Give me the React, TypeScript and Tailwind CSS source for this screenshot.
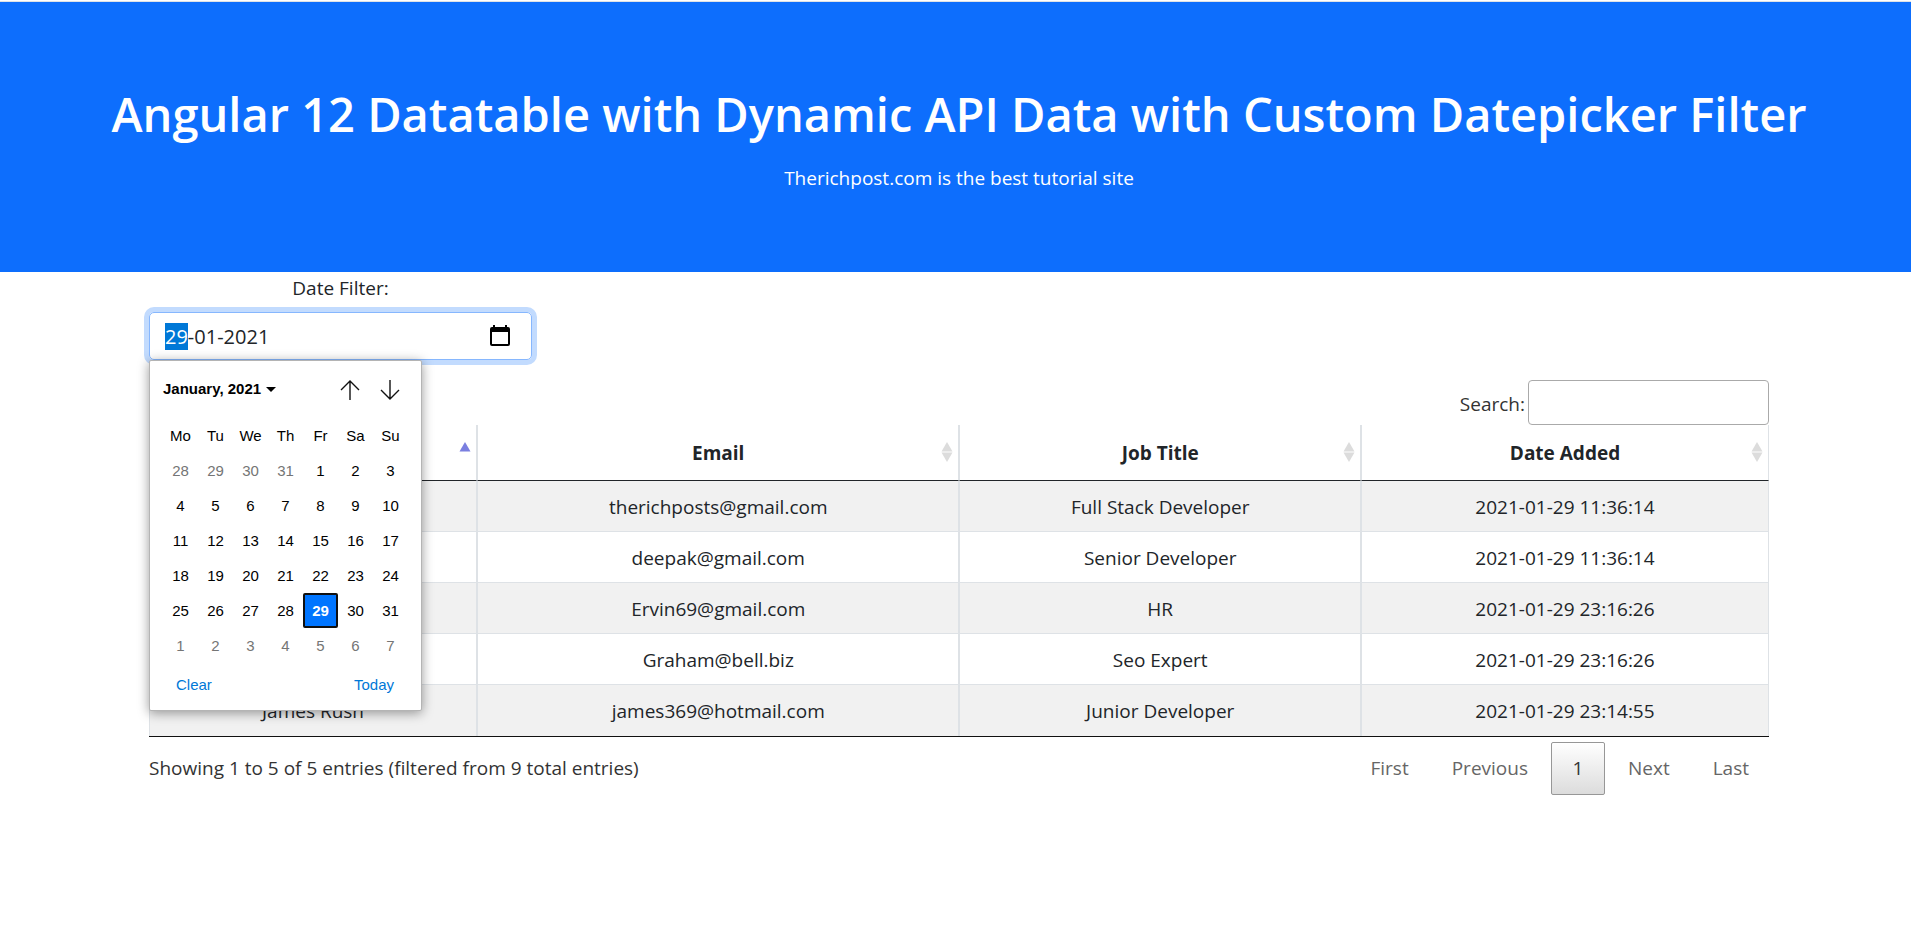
import { useEffect, useRef } from "react";
import { clsx } from "clsx";

type Row = {
  name?: string;
  email: string;
  job: string;
  added: string;
};

const rows: Row[] = [
  { email: "therichposts@gmail.com", job: "Full Stack Developer", added: "2021-01-29 11:36:14" },
  { email: "deepak@gmail.com", job: "Senior Developer", added: "2021-01-29 11:36:14" },
  { email: "Ervin69@gmail.com", job: "HR", added: "2021-01-29 23:16:26" },
  { email: "Graham@bell.biz", job: "Seo Expert", added: "2021-01-29 23:16:26" },
  { name: "James Rush", email: "james369@hotmail.com", job: "Junior Developer", added: "2021-01-29 23:14:55" },
];

const columns = [
  { key: "name", title: "", width: "w-[328px]", sorted: true },
  { key: "email", title: "Email", width: "w-[29.8%]", sorted: false },
  { key: "job", title: "Job Title", width: "w-[24.8%]", sorted: false },
  { key: "added", title: "Date Added", width: "w-[25.2%]", sorted: false },
];

const weekdays = ["Mo", "Tu", "We", "Th", "Fr", "Sa", "Su"];

// 28 Dec 2020 to 7 Feb 2021
const weeks = Array.from({ length: 6 }, (_, week) =>
  Array.from({ length: 7 }, (_, day) => {
    const date = new Date(2020, 11, 28 + week * 7 + day);
    return { day: date.getDate(), inMonth: date.getMonth() === 0 };
  }),
);

function SortIcon({ sorted }: { sorted: boolean }) {
  return (
    <svg viewBox="0 0 12 20" className="mb-[2px] h-5 w-3 shrink-0" aria-hidden="true">
      <path d="M6 0 11.500 9.500H.5z" fill={sorted ? "#7a7fe0" : "#dcdcdc"} />
      {!sorted && <path d="M.5 10.500h11L6 20z" fill="#dcdcdc" />}
    </svg>
  );
}

function CalendarIcon() {
  return (
    <svg viewBox="0 0 20 22" className="h-[22px] w-5" aria-hidden="true">
      <path
        fill="#000"
        fillRule="evenodd"
        d="M3 0h2v2h10V0h2v2h1a2 2 0 0 1 2 2v15a2 2 0 0 1-2 2H2a2 2 0 0 1-2-2V4a2 2 0 0 1 2-2h1zM2 7v12h16V7z"
      />
    </svg>
  );
}

function Arrow({ down = false }: { down?: boolean }) {
  return (
    <svg
      viewBox="0 0 20 20"
      className={clsx("h-5 w-5", down && "rotate-180")}
      fill="none"
      stroke="#111"
      strokeWidth="1.4"
      aria-hidden="true"
    >
      <path d="M10 20V1M1 10l9-9 9 9" />
    </svg>
  );
}

function DatePopup() {
  return (
    <div className="absolute top-full left-0 z-10 w-[273px] rounded-xs border border-[#b4b4b4] bg-white font-['Liberation_Sans',Arial,sans-serif] text-[15px] leading-[18px] text-black shadow-[0_2px_12px_rgba(0,0,0,0.4)]">
      <div className="flex items-center pt-[9px] pr-[11px] pl-[13px]">
        <button type="button" className="flex items-center gap-[5px] pb-[2px] font-bold">
          January, 2021
          <svg viewBox="0 0 10 5" className="h-[5px] w-[10px]" aria-hidden="true">
            <path d="M0 0h10L5 5z" />
          </svg>
        </button>
        <div className="ml-auto flex">
          <button type="button" aria-label="Previous month" className="grid size-10 place-items-center">
            <Arrow />
          </button>
          <button type="button" aria-label="Next month" className="grid size-10 place-items-center">
            <Arrow down />
          </button>
        </div>
      </div>
      <table className="mt-2 ml-[13px] table-fixed border-collapse text-center">
        <thead>
          <tr>
            {weekdays.map((day) => (
              <th key={day} className="h-[35px] w-[35px] p-0 font-normal">
                {day}
              </th>
            ))}
          </tr>
        </thead>
        <tbody>
          {weeks.map((week, index) => (
            <tr key={index}>
              {week.map(({ day, inMonth }) => {
                const selected = inMonth && day === 29;
                return (
                  <td key={day} className="h-[35px] w-[35px] p-0">
                    <button
                      type="button"
                      className={clsx(
                        "block size-[35px]",
                        !inMonth && "text-[#757575]",
                        selected && "rounded-xs border-2 border-[#101010] bg-[#0075ff] font-bold text-white",
                      )}
                    >
                      {day}
                    </button>
                  </td>
                );
              })}
            </tr>
          ))}
        </tbody>
      </table>
      <div className="flex h-[47px] items-center justify-between pr-[27px] pb-1 pl-[26px] text-[#0078d7]">
        <button type="button">Clear</button>
        <button type="button">Today</button>
      </div>
    </div>
  );
}

function DateFilter() {
  const inputRef = useRef<HTMLInputElement>(null);

  useEffect(() => {
    inputRef.current?.focus();
    inputRef.current?.setSelectionRange(0, 2);
  }, []);

  return (
    <div className="w-[383px]">
      <label htmlFor="date-filter" className="block h-10 pt-px text-center leading-[30px]">
        Date Filter:
      </label>
      <div className="relative">
        <input
          ref={inputRef}
          id="date-filter"
          type="text"
          defaultValue="29-01-2021"
          className="block h-12 w-full rounded-[5px] border border-[#86b7fe] px-[15px] pt-px text-[20px] leading-[27px] shadow-[0_0_0_5px_#c2dbfe] outline-none selection:bg-[#0078d7] selection:text-white"
        />
        <button type="button" aria-label="Show date picker" className="absolute top-[13px] right-[22px]">
          <CalendarIcon />
        </button>
        <DatePopup />
      </div>
    </div>
  );
}

function PageButton({ label, current = false }: { label: string; current?: boolean }) {
  return (
    <button
      type="button"
      className={clsx(
        "h-[53px] min-w-[54px] rounded-xs border px-[19px]",
        current
          ? "border-[#979797] bg-linear-to-b from-white to-[#dcdcdc] text-[#333]"
          : "border-transparent text-[#666]",
      )}
    >
      {label}
    </button>
  );
}

export default function App() {
  return (
    <div className="min-h-screen bg-white font-['Open_Sans','Noto_Sans',sans-serif] text-[19px] text-[#212529]">
      <header className="mt-px border-t border-[#dee2e6] bg-[#0d6efd] pt-[82px] pb-[79px] pl-[7px] text-center text-white">
        <h1 className="text-[47px] leading-[60px] font-semibold">
          Angular 12 Datatable with Dynamic API Data with Custom Datepicker Filter
        </h1>
        <p className="mt-[19px] leading-[30px]">Therichpost.com is the best tutorial site</p>
      </header>

      <main className="pl-[7px]">
        <div className="mx-auto max-w-[1650px] px-[15px]">
          <DateFilter />

          <div className="mt-5 flex items-center justify-end gap-[3px] text-[#333]">
            <label htmlFor="search" className="pt-[3px]">
              Search:
            </label>
            <input id="search" type="search" className="h-[45px] w-[241px] rounded-[4px] border border-[#aaa] px-2" />
          </div>

          <table className="w-full table-fixed border-separate border-spacing-0 border-b border-[#111] text-center">
            <thead>
              <tr>
                {columns.map(({ key, title, width, sorted }) => (
                  <th
                    key={key}
                    className={clsx(
                      "h-14 border-x border-b border-x-[#dee2e6] border-b-[#212529] p-0 font-bold",
                      width,
                    )}
                  >
                    <div className="flex items-center pr-[5px] pl-[17px]">
                      <span className="flex-1 pt-[2px]">{title}</span>
                      <SortIcon sorted={sorted} />
                    </div>
                  </th>
                ))}
              </tr>
            </thead>
            <tbody className="[&>tr:last-child>td]:border-b-0">
              {rows.map((row) => (
                <tr key={row.email} className="odd:bg-[#f1f1f1]">
                  {[row.name, row.email, row.job, row.added].map((value, index) => (
                    <td key={index} className="h-[51px] border-x border-b border-[#dee2e6] p-0 pt-[2px]">
                      {value}
                    </td>
                  ))}
                </tr>
              ))}
            </tbody>
          </table>

          <div className="mt-[5px] flex items-center justify-between">
            <p className="text-[#333]">Showing 1 to 5 of 5 entries (filtered from 9 total entries)</p>
            <nav aria-label="Pagination" className="flex gap-[3px]">
              <PageButton label="First" />
              <PageButton label="Previous" />
              <PageButton label="1" current />
              <PageButton label="Next" />
              <PageButton label="Last" />
            </nav>
          </div>
        </div>
      </main>
    </div>
  );
}
